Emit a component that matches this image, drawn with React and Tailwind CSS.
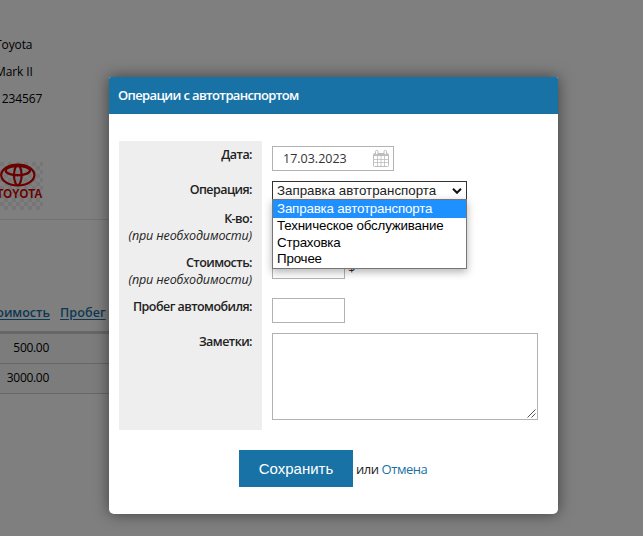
const details = ['Toyota', 'Mark II', '1234567'];
const costs = ['500.00', '3000.00'];
const options = ['Заправка автотранспорта', 'Техническое обслуживание', 'Страховка', 'Прочее'];

const ToyotaLogo = () => (
  <svg className="block -ml-[8px] mt-[50px]" width="51" height="48" viewBox="0 0 51 48">
    <defs>
      <pattern id="checks" width="8" height="8" patternUnits="userSpaceOnUse">
        <rect width="8" height="8" fill="#fff" />
        <path d="M0 0h4v4H0zM4 4h4v4H4z" fill="#ececec" />
      </pattern>
    </defs>
    <rect width="51" height="48" fill="url(#checks)" />
    <g fill="none" stroke="#d40000">
      <ellipse cx="25.8" cy="13" rx="16.6" ry="10.4" strokeWidth="2.2" />
      <ellipse cx="25.8" cy="8.6" rx="12.2" ry="4.6" strokeWidth="2.4" />
      <ellipse cx="25.8" cy="13.2" rx="3.8" ry="9.8" strokeWidth="2.2" />
    </g>
    <text x="4.5" y="36" textLength="46" lengthAdjust="spacingAndGlyphs" fill="#d40000"
      className="font-['Liberation_Sans',sans-serif] text-[12px] font-bold">TOYOTA</text>
  </svg>
);

const CalendarIcon = () => (
  <svg className="-mt-px" width="16" height="17" viewBox="0 0 16 17" fill="none" stroke="#bdbdbd">
    <rect x=".5" y="3.5" width="15" height="13" rx="1" />
    <path d="M1 4.5h14M1 5.5h14" />
    <path d="M1 9.5h14M1 12.5h14M4.5 6v10M8 6v10M11.5 6v10" strokeWidth=".8" />
    <rect x="2.5" y=".5" width="2.5" height="4" rx="1" fill="#fff" />
    <rect x="11" y=".5" width="2.5" height="4" rx="1" fill="#fff" />
  </svg>
);

const Label = ({ children, hint, className }) => (
  <div className={`text-right ${className}`}>
    <div className="font-semibold tracking-[-0.55px]">{children}</div>
    {hint && <div className="italic tracking-[-0.15px]">{hint}</div>}
  </div>
);

// Vehicle card and its cost table, behind the dialog
const VehiclePage = () => (
  <div className="h-[536px] w-[540px] overflow-hidden text-[12px] text-black">
    <div className="h-[219px] pt-[31px]">
      {details.map((item) => (
        <div key={item} className="-ml-[5px] h-[27px] leading-[27px] tracking-[-0.1px] whitespace-nowrap">
          {item}
        </div>
      ))}
      <ToyotaLogo />
    </div>
    <div className="h-[112px] border-t border-[#e4e4e4] pt-[83px]">
      <div className="flex gap-[10px] text-[12.5px] font-semibold text-[#1872a6] underline underline-offset-2 leading-[20px] whitespace-nowrap">
        <div className="flex w-[50px] justify-end">Стоимость</div>
        <div className="w-[49px] overflow-hidden tracking-[0.1px]">Пробег </div>
      </div>
    </div>
    <div className="border-t-[3px] border-[#cfcfcf]">
      {costs.map((cost) => (
        <div key={cost} className="h-[30px] border-b border-[#cfcfcf] bg-[#f8f8f8] leading-[28px]">
          <div className="w-[49px] text-right tracking-[-0.3px]">{cost}</div>
        </div>
      ))}
    </div>
  </div>
);

const OperationSelect = () => (
  <div className="relative mt-[10px] w-[195px] font-['Liberation_Sans',Arial,sans-serif] text-[13.33px] text-black">
    <div className="flex h-[19px] items-center justify-between border border-[#333] bg-white pl-[4px] pr-[4px]">
      <span className="whitespace-nowrap text-[#222]">{options[0]}</span>
      <svg width="10" height="6" viewBox="0 0 10 6" fill="none" stroke="#111" strokeWidth="2">
        <path d="M1 .8l4 4 4-4" />
      </svg>
    </div>
    <div className="absolute left-0 top-[18px] z-10 h-[70px] w-[195px] border border-[#767676] bg-white tracking-[-0.17px] shadow-[0_3px_8px_rgba(0,0,0,0.3)]">
      {options.map((option, i) => (
        <div key={option} className={`pl-[4px] whitespace-nowrap ${i === 0 ? 'h-[18px] bg-[#1e90ff] leading-[18px] text-white' : 'h-[16.5px] leading-[16.5px]'}`}>
          {option}
        </div>
      ))}
    </div>
  </div>
);

const OperationForm = () => (
  <div className="flex gap-[10px] px-[10px] pt-[27px]">
    <div className="h-[289px] w-[143px] bg-[#eee] pr-[10px] pt-[5px] text-[12.5px] leading-[17px] whitespace-nowrap">
      <Label className="h-[35px]">Дата:</Label>
      <Label className="h-[29px]">Операция:</Label>
      <Label className="h-[44px]" hint="(при необходимости)">К-во:</Label>
      <Label className="h-[44px]" hint="(при необходимости)">Стоимость:</Label>
      <Label className="h-[35px]">Пробег автомобиля:</Label>
      <Label>Заметки:</Label>
    </div>
    <div className="pt-[5px]">
      <div className="flex h-[25px] w-[122px] items-center justify-between border border-[#b2b2b2] pl-[10px] pr-[4px] text-[12.5px] text-[#333]">
        <span className="pt-px">17.03.2023</span>
        <CalendarIcon />
      </div>
      <OperationSelect />
      <div className="mt-[10px] h-[25px] w-[73px] border border-[#b2b2b2]" />
      <div className="mt-[19px] flex h-[25px] items-center gap-[3px]">
        <div className="h-[25px] w-[73px] border border-[#b2b2b2]" />
        <span className="text-[13px] leading-[20px]">$</span>
      </div>
      <div className="mt-[19px] h-[25px] w-[73px] border border-[#b2b2b2]" />
      <div className="mt-[10px] flex h-[87px] w-[266px] items-end justify-end border border-[#b2b2b2] p-px">
        <svg width="9" height="9" viewBox="0 0 9 9" stroke="#555" strokeWidth="1">
          <path d="M.5 8.5l8-8M4.5 8.5l4-4" />
        </svg>
      </div>
    </div>
  </div>
);

const App = () => {
  return (
    <div className="relative h-[536px] w-[643px] overflow-hidden bg-white font-['Open_Sans','Noto_Sans',sans-serif] text-[#222]">
      <VehiclePage />

      {/* Backdrop */}
      <div className="absolute inset-0 bg-black/50" />

      {/* Dialog */}
      <div className="absolute left-[109px] top-[77px] h-[437px] w-[449px] rounded-b-[5px] rounded-t-[2px] bg-white shadow-[0_0_15px_rgba(0,0,0,0.5)]">
        <div className="h-[37px] rounded-t-[2px] bg-[#1872a6] pl-[9px] text-[13px] font-semibold leading-[37px] tracking-[-0.64px] text-white">
          Операции с автотранспортом
        </div>
        <OperationForm />
        <div className="mt-[20px] flex items-center gap-[3px] pl-[130px] text-[13px] tracking-[-0.45px]">
          <button className="h-[37px] w-[114px] bg-[#1872a6] pt-px font-['Liberation_Sans',Arial,sans-serif] text-[15px] tracking-normal text-white">
            Сохранить
          </button>
          <span className="pt-[2px]">или <a className="text-[#1872a6]">Отмена</a></span>
        </div>
      </div>
    </div>
  );
};

export default App;
